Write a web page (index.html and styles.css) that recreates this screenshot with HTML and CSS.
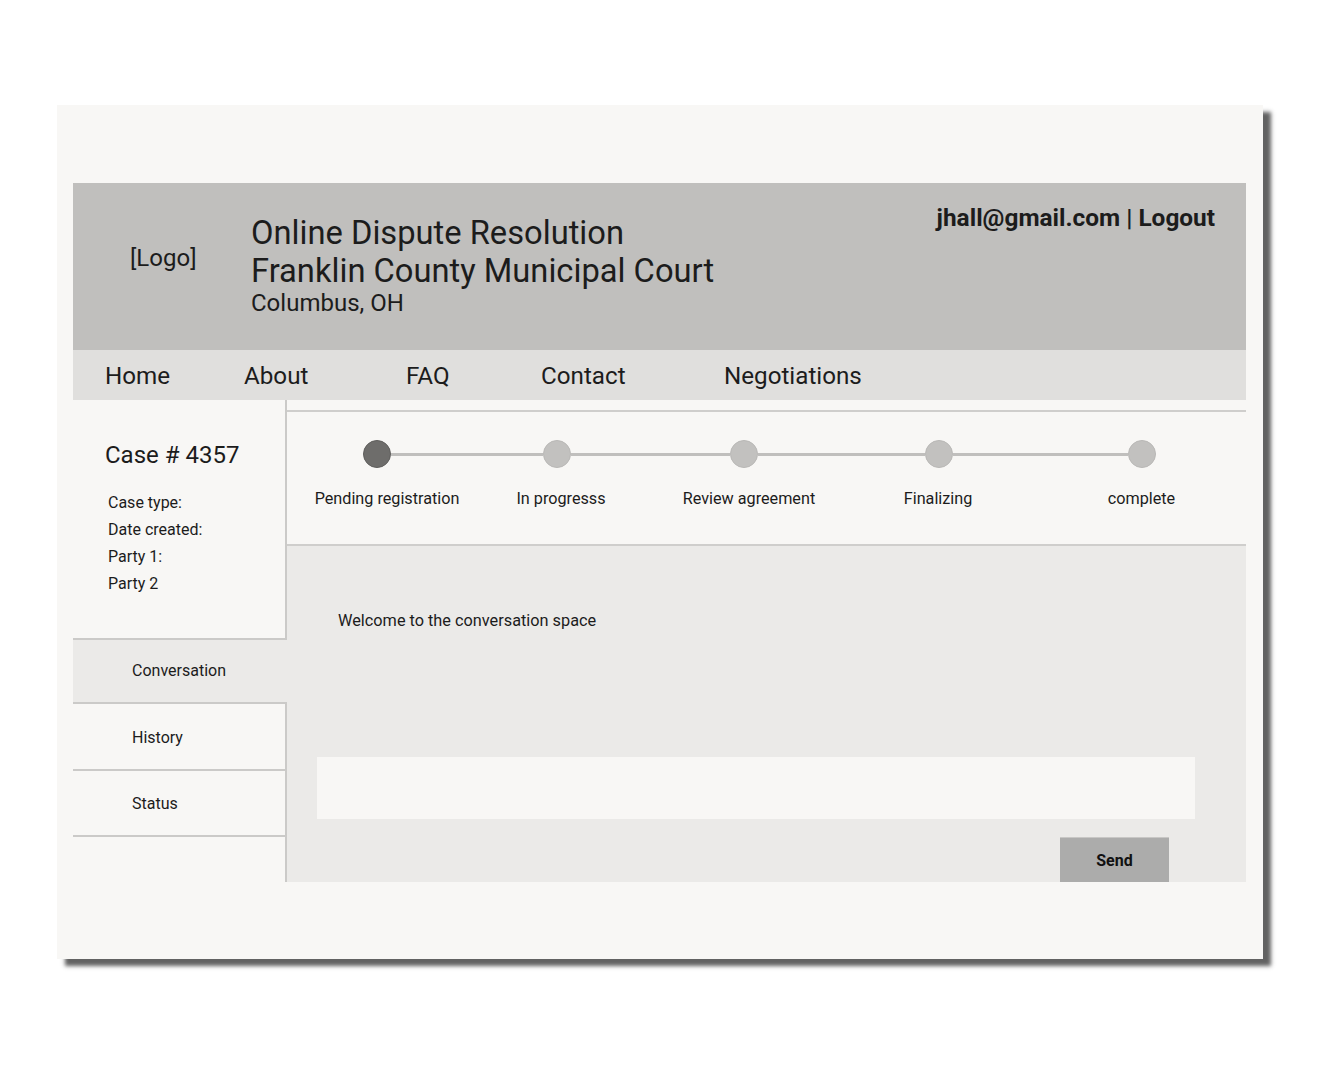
FILE: index.html
```html
<!DOCTYPE html>
<html lang="en">
<head>
<meta charset="utf-8">
<title>Online Dispute Resolution</title>
<link rel="stylesheet" href="styles.css">
</head>
<body>
<div class="paper">
  <header class="header">
    <div class="logo">[Logo]</div>
    <div class="titles">
      <div class="title">Online Dispute Resolution</div>
      <div class="title">Franklin County Municipal Court</div>
      <div class="subtitle">Columbus, OH</div>
    </div>
    <div class="user">jhall@gmail.com | Logout</div>
  </header>
  <nav class="nav">
    <a class="nav-link">Home</a>
    <a class="nav-link">About</a>
    <a class="nav-link">FAQ</a>
    <a class="nav-link">Contact</a>
    <a class="nav-link">Negotiations</a>
  </nav>
  <div class="main">
    <aside class="sidebar">
      <div class="info">
        <div class="case">Case # 4357</div>
        <div class="meta">Case type:</div>
        <div class="meta">Date created:</div>
        <div class="meta">Party 1:</div>
        <div class="meta">Party 2</div>
      </div>
      <div class="tab active">Conversation</div>
      <div class="tab history">History</div>
      <div class="tab">Status</div>
    </aside>
    <section class="panel">
      <div class="stepper">
        <div class="step s1 current">
          <div class="track"><span class="dot"></span></div>
          <div class="label">Pending registration</div>
        </div>
        <div class="step s2">
          <div class="track"><span class="dot"></span></div>
          <div class="label">In progresss</div>
        </div>
        <div class="step s3">
          <div class="track"><span class="dot"></span></div>
          <div class="label">Review agreement</div>
        </div>
        <div class="step s4">
          <div class="track"><span class="dot"></span></div>
          <div class="label">Finalizing</div>
        </div>
        <div class="step s5">
          <div class="track"><span class="dot"></span></div>
          <div class="label">complete</div>
        </div>
      </div>
      <div class="conversation">
        <p class="welcome">Welcome to the conversation space</p>
        <div class="spacer"></div>
        <div class="input-box"></div>
        <div class="actions">
          <button class="send">Send</button>
        </div>
      </div>
    </section>
  </div>
</div>
</body>
</html>
```

FILE: styles.css
```css
* { box-sizing: border-box; }

html, body {
  margin: 0;
  padding: 0;
  background: #ffffff;
}

body {
  font-family: Roboto, "Liberation Sans", Arial, sans-serif;
  color: #1c1c1c;
  padding-bottom: 60px;
}

.paper {
  margin: 105px 0 0 57px;
  width: 1206px;
  height: 854px;
  background: #f8f7f5;
  padding: 78px 17px 77px 16px;
  box-shadow: 8px 7px 4px rgba(70, 70, 70, 0.85);
  display: flex;
  flex-direction: column;
}

/* Header */
.header {
  height: 167px;
  background: #c0bfbd;
  display: flex;
  align-items: flex-start;
}

.logo {
  font-size: 24px;
  line-height: 28px;
  margin: 61px 0 0 57px;
  width: 121px;
}

.titles {
  padding-top: 31px;
  flex: 1;
}

.title {
  font-size: 32.7px;
  line-height: 38px;
}

.subtitle {
  font-size: 24px;
  line-height: 26px;
}

.user {
  font-size: 24.4px;
  font-weight: 700;
  line-height: 28px;
  margin: 21px 31px 0 0;
}

/* Nav */
.nav {
  height: 50px;
  background: #e0dfdd;
  display: grid;
  grid-template-columns: 139px 162px 135px 183px auto;
  align-items: center;
  padding-left: 32px;
}

.nav-link {
  font-size: 24.2px;
  line-height: 28px;
  color: #1c1c1c;
  padding-top: 2px;
}

/* Main */
.main {
  flex: 1;
  display: grid;
  grid-template-columns: 214px 1fr;
}

.sidebar {
  border-right: 2px solid #cbcac8;
  display: flex;
  flex-direction: column;
}

.info {
  height: 240px;
  border-bottom: 2px solid #cbcac8;
  padding: 40px 0 0 32px;
}

.case {
  font-size: 24px;
  line-height: 30px;
  margin-bottom: 19px;
}

.meta {
  font-size: 16px;
  line-height: 27px;
  padding-left: 3px;
}

.tab {
  height: 66px;
  border-bottom: 2px solid #cbcac8;
  padding-left: 59px;
  display: flex;
  align-items: center;
  font-size: 16px;
}

.tab.active {
  height: 64px;
  background: #ebeae8;
  margin-right: -2px;
  padding-bottom: 2px;
}

.tab.history {
  height: 67px;
  padding-top: 2px;
}

/* Right panel */
.panel {
  padding-top: 10px;
  display: flex;
  flex-direction: column;
}

.stepper {
  height: 136px;
  border-top: 2px solid #cfcecc;
  border-bottom: 2px solid #cfcecc;
  background: #f8f7f5;
  display: grid;
  grid-template-columns: 180px 180px 194px 196px 1fr;
  padding-top: 28px;
}

.step {
  display: flex;
  flex-direction: column;
  align-items: center;
}

.track {
  width: 100%;
  height: 28px;
  display: flex;
  align-items: center;
}

.track::before,
.track::after {
  content: "";
  flex: 1;
  height: 3px;
  background: #c0bfbd;
}

.s1 .track::before,
.s5 .track::after {
  background: transparent;
}

.dot {
  width: 28px;
  height: 28px;
  border-radius: 50%;
  background: #c2c1bf;
  border: 1px solid #b9b8b6;
}

.current .dot {
  background: #6e6d6b;
  border-color: #5f5e5c;
}

.label {
  font-size: 16.2px;
  line-height: 20px;
  margin-top: 21px;
  white-space: nowrap;
}

.s1 .label { margin-left: 20px; }
.s2 .label { margin-left: 8px; }
.s3 .label { margin-left: 10px; }
.s4 .label { margin-left: -2px; }

.conversation {
  flex: 1;
  background: #ebeae8;
  display: flex;
  flex-direction: column;
  padding-left: 30px;
}

.welcome {
  margin: 65px 0 0 21px;
  font-size: 16.3px;
  line-height: 20px;
}

.spacer {
  flex: 1;
}

.input-box {
  height: 62px;
  margin-right: 51px;
  background: #f8f7f5;
}

.actions {
  display: flex;
  justify-content: flex-end;
  margin-top: 18px;
  padding-right: 77px;
}

.send {
  width: 109px;
  height: 45px;
  background: #acacab;
  border: none;
  border-top: 1px solid #c8c7c5;
  font-family: Roboto, "Liberation Sans", Arial, sans-serif;
  font-size: 16px;
  font-weight: 700;
  color: #111;
  padding: 0;
}
```
